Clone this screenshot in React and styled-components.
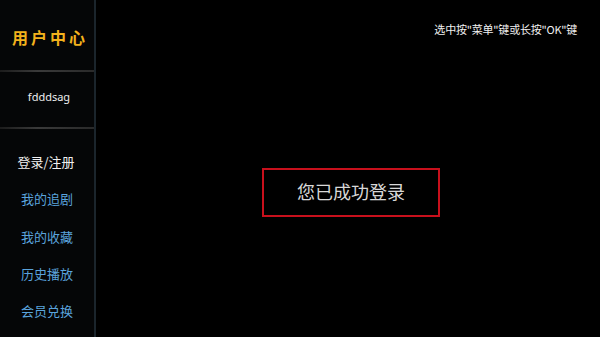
import React from 'react';
import styled, { createGlobalStyle } from 'styled-components';

const Global = createGlobalStyle`
  html, body {
    margin: 0;
    padding: 0;
    background: #000;
  }
  body {
    font-family: "Noto Sans CJK SC", "Noto Sans", sans-serif;
  }
`;

const Screen = styled.div`
  width: 600px;
  height: 337px;
  display: flex;
  background: #000;
  overflow: hidden;
`;

const Sidebar = styled.div`
  width: 94px;
  flex-shrink: 0;
  background: #050607;
  border-right: 2px solid #1b252c;
  display: flex;
  flex-direction: column;
`;

const Title = styled.div`
  height: 70px;
  display: flex;
  align-items: center;
  justify-content: center;
  color: #f3b21c;
  font-size: 16px;
  font-weight: bold;
  letter-spacing: 3px;
  padding: 4px 0 0 6px;
  box-sizing: border-box;
`;

const Divider = styled.div`
  height: 2px;
  background: linear-gradient(to right, #1c1c1c, #3a3a3a 40%, #2a2a2a);
`;

const User = styled.div`
  height: 55px;
  display: flex;
  align-items: center;
  justify-content: center;
  color: #eee;
  font-size: 11px;
  font-family: "Noto Sans", sans-serif;
  padding: 0 0 6px 4px;
  box-sizing: border-box;
`;

const Menu = styled.div`
  display: flex;
  flex-direction: column;
  padding-top: 14px;
`;

const MenuItem = styled.div`
  height: 37.3px;
  display: flex;
  align-items: center;
  justify-content: center;
  font-size: 13px;
  color: ${({ active }) => (active ? '#f0f0f0' : '#5aa3dc')};
  padding-right: ${({ active }) => (active ? '2px' : '0')};
`;

const Main = styled.div`
  flex: 1;
  display: flex;
  flex-direction: column;
`;

const Hint = styled.div`
  text-align: right;
  color: #f0f0f0;
  font-size: 11px;
  padding: 21px 23px 0 0;
  letter-spacing: -0.2px;
`;

const Center = styled.div`
  flex: 1;
  display: flex;
  justify-content: center;
  padding-top: 131px;
  padding-left: 6px;
`;

const Notice = styled.div`
  width: 174px;
  height: 41px;
  border: 2px solid #c8101c;
  display: flex;
  align-items: center;
  justify-content: center;
  color: #d8d8d8;
  font-size: 18px;
  padding-bottom: 4px;
  box-sizing: content-box;
`;

const items = ['我的追剧', '我的收藏', '历史播放', '会员兑换'];

export default function App() {
  return (
    <>
      <Global />
      <Screen>
        <Sidebar>
          <Title>用户中心</Title>
          <Divider />
          <User>fdddsag</User>
          <Divider />
          <Menu>
            <MenuItem active>登录/注册</MenuItem>
            {items.map((t) => (
              <MenuItem key={t}>{t}</MenuItem>
            ))}
          </Menu>
        </Sidebar>
        <Main>
          <Hint>选中按"菜单"键或长按"OK"键</Hint>
          <Center>
            <div>
              <Notice>您已成功登录</Notice>
            </div>
          </Center>
        </Main>
      </Screen>
    </>
  );
}
